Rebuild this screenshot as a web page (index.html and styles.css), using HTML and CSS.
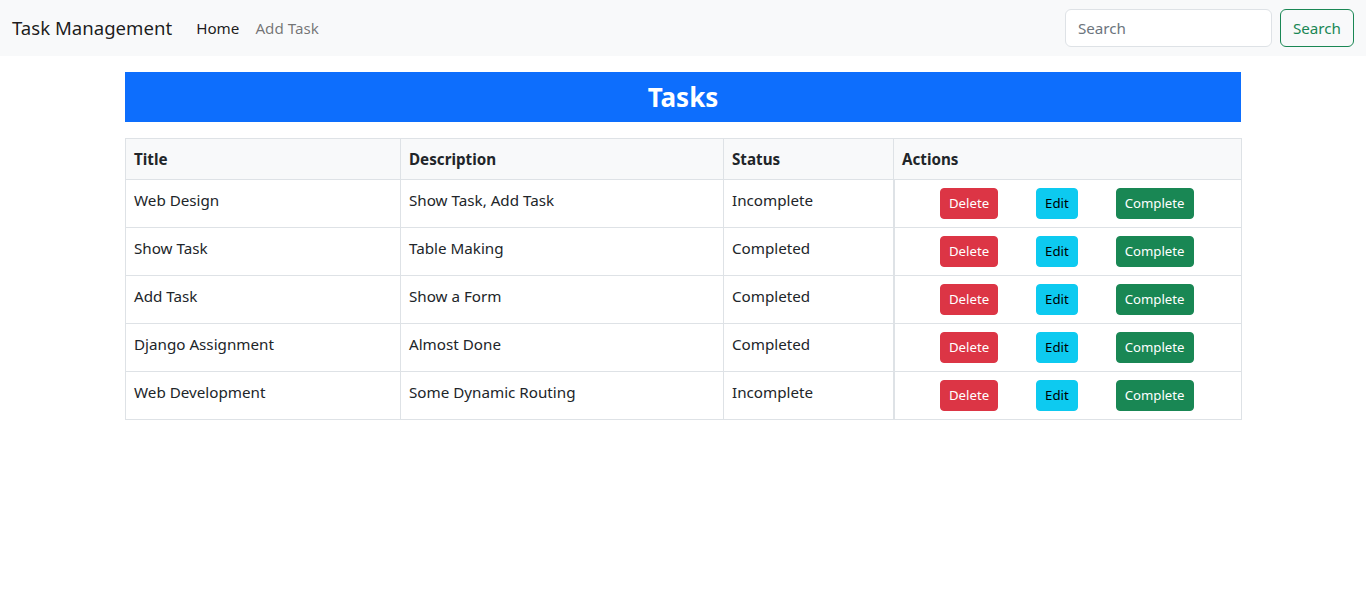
FILE: index.html
```html
<!DOCTYPE html>
<html lang="en">
<head>
<meta charset="utf-8">
<title>Task Management</title>
<link rel="stylesheet" href="styles.css">
</head>
<body>
<nav class="navbar">
  <div class="nav-left">
    <a class="brand" href="#">Task Management</a>
    <ul class="nav-links">
      <li><a class="nav-link active" href="#">Home</a></li>
      <li><a class="nav-link" href="#">Add Task</a></li>
    </ul>
  </div>
  <form class="search-form">
    <input class="search-input" type="search" placeholder="Search">
    <button class="btn-outline" type="button">Search</button>
  </form>
</nav>
<main class="container">
  <h2 class="page-title">Tasks</h2>
  <table class="tasks">
    <colgroup>
      <col class="c-title"><col class="c-desc"><col class="c-status"><col class="c-actions">
    </colgroup>
    <thead>
      <tr><th>Title</th><th>Description</th><th>Status</th><th>Actions</th></tr>
    </thead>
    <tbody>
      <tr><td>Web Design</td><td>Show Task, Add Task</td><td>Incomplete</td>
        <td class="actions"><div class="btns"><button class="btn red">Delete</button><button class="btn cyan">Edit</button><button class="btn green">Complete</button></div></td></tr>
      <tr><td>Show Task</td><td>Table Making</td><td>Completed</td>
        <td class="actions"><div class="btns"><button class="btn red">Delete</button><button class="btn cyan">Edit</button><button class="btn green">Complete</button></div></td></tr>
      <tr><td>Add Task</td><td>Show a Form</td><td>Completed</td>
        <td class="actions"><div class="btns"><button class="btn red">Delete</button><button class="btn cyan">Edit</button><button class="btn green">Complete</button></div></td></tr>
      <tr><td>Django Assignment</td><td>Almost Done</td><td>Completed</td>
        <td class="actions"><div class="btns"><button class="btn red">Delete</button><button class="btn cyan">Edit</button><button class="btn green">Complete</button></div></td></tr>
      <tr><td>Web Development</td><td>Some Dynamic Routing</td><td>Incomplete</td>
        <td class="actions"><div class="btns"><button class="btn red">Delete</button><button class="btn cyan">Edit</button><button class="btn green">Complete</button></div></td></tr>
    </tbody>
  </table>
</main>
</body>
</html>
```
FILE: styles.css
```css
* { box-sizing: border-box; }
html, body { margin: 0; padding: 0; }
body {
  font-family: "Noto Sans", "Open Sans", sans-serif;
  font-size: 15.2px;
  line-height: 24px;
  color: #212529;
  background: #fff;
}
.navbar {
  height: 56px;
  background: #f8f9fa;
  display: flex;
  align-items: center;
  justify-content: space-between;
  padding: 0 12px;
}
.nav-left { display: flex; align-items: center; }
.brand {
  font-size: 18.6px;
  color: rgba(0,0,0,.9);
  text-decoration: none;
  margin-right: 16px;
  line-height: 30px;
  padding: 5px 0;
}
.nav-links { display: flex; list-style: none; margin: 0; padding: 0; }
.nav-link {
  display: block;
  padding: 8px;
  color: rgba(0,0,0,.55);
  text-decoration: none;
  font-size: 15.2px;
}
.nav-link.active { color: rgba(0,0,0,.9); }
.search-form { display: flex; align-items: center; }
.search-input {
  width: 207px;
  height: 38px;
  border: 1px solid #dee2e6;
  border-radius: 6px;
  padding: 6px 12px;
  font: inherit;
  font-size: 15.2px;
  color: #212529;
  background: #fff;
  margin-right: 8px;
  outline: none;
}
.search-input::placeholder { color: #6c757d; }
.btn-outline {
  height: 38px;
  border: 1px solid #198754;
  color: #198754;
  background: transparent;
  border-radius: 6px;
  padding: 6px 12px;
  font: inherit;
  font-size: 15.2px;
  line-height: 24px;
}
.container {
  width: 1140px;
  margin: 0 auto;
  padding: 16px 12px 0;
}
.page-title {
  margin: 0 0 16px;
  height: 50px;
  background: #0d6efd;
  color: #fff;
  text-align: center;
  font-size: 26px;
  font-weight: 700;
  line-height: 50px;
}
.tasks {
  width: 100%;
  border-collapse: collapse;
  table-layout: fixed;
}
.c-title { width: 275px; }
.c-desc { width: 323px; }
.c-status { width: 170px; }
.c-actions { width: 348px; }
.tasks th, .tasks td {
  border: 1px solid #dee2e6;
  padding: 8px;
  text-align: left;
  vertical-align: top;
  font-size: 15.2px;
  line-height: 24px;
}
.tasks thead th {
  background: #f8f9fa;
  font-weight: 700;
  vertical-align: bottom;
}
.tasks td.actions { border-left-width: 2px; }
.btns {
  display: flex;
  justify-content: center;
  gap: 38px;
  padding-right: 2px;
}
.btn {
  border: 1px solid transparent;
  border-radius: 4px;
  padding: 4px 8px;
  font: inherit;
  font-size: 13.2px;
  line-height: 21px;
  color: #fff;
}
.btn.red { background: #dc3545; border-color: #dc3545; }
.btn.cyan { background: #0dcaf0; border-color: #0dcaf0; color: #000; }
.btn.green { background: #198754; border-color: #198754; }
```
